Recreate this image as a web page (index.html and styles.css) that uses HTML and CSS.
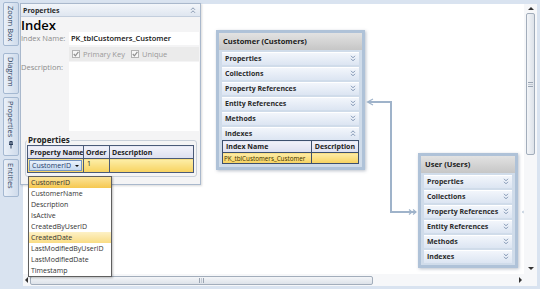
FILE: index.html
```html
<!DOCTYPE html>
<html lang="en">

<head>
    <meta charset="UTF-8">
    <meta name="viewport" content="width=device-width, initial-scale=1.0">
    <title>Entity Diagram</title>
    <link rel="stylesheet" href="styles.css">
</head>

<body>
    <div class="app">
        <nav class="side-tabs">
            <div class="side-tab tab-zoom">Zoom Box</div>
            <div class="side-tab tab-diagram">Diagram</div>
            <div class="side-tab tab-props">Properties
                <svg class="pin" viewBox="0 0 8 8"><path d="M4 0.5v3M2 3.5h4M2.8 3.5v-3h2.4v3M4 3.5v4"/></svg>
            </div>
            <div class="side-tab tab-entities">Entities</div>
        </nav>

        <div class="workspace">
            <div class="canvas">
                <!-- link between Customer and User -->
                <svg class="links" width="501" height="269" viewBox="0 0 501 269">
                    <path class="link-line" d="M345 98H368V208H393"/>
                    <path class="link-head" d="M350 95L344.5 98L350 101"/>
                    <path class="link-head" d="M386 205.5l3 2.5-3 2.5M390 205.5l3 2.5-3 2.5"/>
                    <path class="link-head" d="M499 208h5M501 206l2 2-2 2"/>
                </svg>

                <div class="entity customer">
                    <div class="entity-head">Customer (Customers)</div>
                    <div class="entity-row">Properties<svg class="chev" viewBox="0 0 6 7"><path d="M1 0.8l2 2 2-2M1 3.8l2 2 2-2"/></svg></div>
                    <div class="entity-row">Collections<svg class="chev" viewBox="0 0 6 7"><path d="M1 0.8l2 2 2-2M1 3.8l2 2 2-2"/></svg></div>
                    <div class="entity-row">Property References<svg class="chev" viewBox="0 0 6 7"><path d="M1 0.8l2 2 2-2M1 3.8l2 2 2-2"/></svg></div>
                    <div class="entity-row">Entity References<svg class="chev" viewBox="0 0 6 7"><path d="M1 0.8l2 2 2-2M1 3.8l2 2 2-2"/></svg></div>
                    <div class="entity-row">Methods<svg class="chev" viewBox="0 0 6 7"><path d="M1 0.8l2 2 2-2M1 3.8l2 2 2-2"/></svg></div>
                    <div class="entity-row">Indexes<svg class="chev" viewBox="0 0 6 7"><path d="M1 2.8l2-2 2 2M1 5.8l2-2 2 2"/></svg></div>
                    <table class="index-table">
                        <thead>
                            <tr>
                                <th class="col-index">Index Name</th>
                                <th>Description</th>
                            </tr>
                        </thead>
                        <tbody>
                            <tr>
                                <td>PK_tblCustomers_Customer</td>
                                <td></td>
                            </tr>
                        </tbody>
                    </table>
                </div>

                <div class="entity user">
                    <div class="entity-head">User (Users)</div>
                    <div class="entity-row">Properties<svg class="chev" viewBox="0 0 6 7"><path d="M1 0.8l2 2 2-2M1 3.8l2 2 2-2"/></svg></div>
                    <div class="entity-row">Collections<svg class="chev" viewBox="0 0 6 7"><path d="M1 0.8l2 2 2-2M1 3.8l2 2 2-2"/></svg></div>
                    <div class="entity-row">Property References<svg class="chev" viewBox="0 0 6 7"><path d="M1 0.8l2 2 2-2M1 3.8l2 2 2-2"/></svg></div>
                    <div class="entity-row">Entity References<svg class="chev" viewBox="0 0 6 7"><path d="M1 0.8l2 2 2-2M1 3.8l2 2 2-2"/></svg></div>
                    <div class="entity-row">Methods<svg class="chev" viewBox="0 0 6 7"><path d="M1 0.8l2 2 2-2M1 3.8l2 2 2-2"/></svg></div>
                    <div class="entity-row">Indexes<svg class="chev" viewBox="0 0 6 7"><path d="M1 0.8l2 2 2-2M1 3.8l2 2 2-2"/></svg></div>
                </div>
            </div>

            <div class="vscroll">
                <span class="arrow arrow-up"></span>
                <div class="thumb thumb-v"><span class="grip grip-v"></span></div>
                <span class="arrow arrow-down"></span>
            </div>
            <div class="hscroll">
                <span class="arrow arrow-left"></span>
                <div class="thumb thumb-h"><span class="grip grip-h"></span></div>
                <span class="arrow arrow-right"></span>
            </div>
            <div class="corner"></div>
        </div>

        <!-- floating properties pane -->
        <section class="props-pane">
            <header class="pane-head">
                <span>Properties</span>
                <svg class="chev chev-head" viewBox="0 0 6 7"><path d="M1 2.8l2-2 2 2M1 5.8l2-2 2 2"/></svg>
            </header>
            <div class="pane-body">
                <h2 class="pane-title">Index</h2>
                <div class="form-grid">
                    <label class="field-label">Index Name:</label>
                    <div class="text-input">PK_tblCustomers_Customer</div>
                    <span></span>
                    <div class="check-row">
                        <span class="check">
                            <svg class="check-box" viewBox="0 0 8 8"><rect x="0.5" y="0.5" width="7" height="7"/><path d="M1.8 4l1.6 1.8 3-4"/></svg>
                            Primary Key
                        </span>
                        <span class="check">
                            <svg class="check-box" viewBox="0 0 8 8"><rect x="0.5" y="0.5" width="7" height="7"/><path d="M1.8 4l1.6 1.8 3-4"/></svg>
                            Unique
                        </span>
                    </div>
                    <label class="field-label">Description:</label>
                    <div class="text-area"></div>
                </div>

                <fieldset class="group">
                    <legend>Properties</legend>
                    <table class="grid-table">
                        <thead>
                            <tr>
                                <th class="col-name">Property Name</th>
                                <th class="col-order">Order</th>
                                <th>Description</th>
                            </tr>
                        </thead>
                        <tbody>
                            <tr>
                                <td class="combo-cell">
                                    <div class="combo">CustomerID<span class="combo-arrow"></span></div>
                                </td>
                                <td>1</td>
                                <td></td>
                            </tr>
                        </tbody>
                    </table>
                </fieldset>
            </div>
        </section>

        <ul class="dropdown">
            <li class="current">CustomerID</li>
            <li>CustomerName</li>
            <li>Description</li>
            <li>IsActive</li>
            <li>CreatedByUserID</li>
            <li class="hover">CreatedDate</li>
            <li>LastModifiedByUserID</li>
            <li>LastModifiedDate</li>
            <li>Timestamp</li>
        </ul>
    </div>
</body>

</html>
```

FILE: styles.css
```css
* {
    box-sizing: border-box;
}

body {
    margin: 0;
    background-color: #d9e3f0;
    font-family: "Open Sans", "DejaVu Sans", sans-serif;
    font-size: 7px;
    color: #222;
}

.app {
    position: relative;
    display: flex;
    width: 540px;
    height: 289px;
    overflow: hidden;
}

/* left auto-hide tabs */
.side-tabs {
    width: 22px;
    flex: none;
    display: flex;
    flex-direction: column;
    padding: 2px 0 0 3px;
}

.side-tab {
    width: 16px;
    writing-mode: vertical-rl;
    display: flex;
    align-items: center;
    font-size: 7.5px;
    line-height: 14px;
    white-space: nowrap;
    color: #2a3d5a;
    background: linear-gradient(to right, #eaf0f8, #cfdbeb);
    border: 1px solid #a4b8d1;
    border-radius: 2px;
    padding: 3px 0;
}

.tab-zoom {
    height: 44px;
}

.tab-diagram {
    height: 41px;
    margin-top: 7px;
}

.tab-props {
    height: 59px;
    margin-top: 3px;
}

.tab-entities {
    height: 38px;
    margin-top: 3px;
}

.pin {
    width: 8px;
    height: 8px;
    margin-top: 4px;
    fill: none;
    stroke: #2a3d5a;
    stroke-width: 1;
}

/* diagram area */
.workspace {
    flex: 1;
    display: grid;
    grid-template-columns: 1fr 13px;
    grid-template-rows: 1fr 12px;
    margin: 4px 3px 3px 1px;
    background-color: #fff;
}

.canvas {
    position: relative;
    background-color: #fff;
}

.links {
    position: absolute;
    left: 0;
    top: 0;
}

.link-line {
    fill: none;
    stroke: #9fb3ca;
    stroke-width: 2;
}

.link-head {
    fill: none;
    stroke: #9fb3ca;
    stroke-width: 1.2;
}

.entity {
    position: absolute;
    background-color: #d0dcea;
    border: 3px solid #afc2d8;
    padding-bottom: 3px;
    box-shadow: 1px 1px 3px rgba(60, 80, 110, 0.35);
}

.customer {
    left: 193px;
    top: 26px;
    width: 149px;
}

.user {
    left: 395px;
    top: 149px;
    width: 100px;
    padding-bottom: 2px;
}

.entity-head {
    height: 17px;
    line-height: 17px;
    padding-left: 4px;
    font-size: 7.5px;
    font-weight: 700;
    color: #1b1b1b;
    background: linear-gradient(#e2e2e2, #c6c6c6);
}

.entity-row {
    display: flex;
    justify-content: space-between;
    align-items: center;
    height: 13px;
    margin: 2px 3px 0;
    padding: 0 3px 0 3px;
    font-weight: 700;
    color: #2b2b2b;
    background: linear-gradient(#f4f7fc, #dce5f2);
    box-shadow: inset 0 1px #fff;
    white-space: nowrap;
}

.chev {
    width: 6px;
    height: 7px;
    flex: none;
    fill: none;
    stroke: #8296b3;
    stroke-width: 1;
}

.index-table {
    width: calc(100% - 6px);
    margin: 0 3px;
    border-collapse: collapse;
    border: 1px solid #3c4f6e;
}

.index-table th,
.index-table td {
    border: 1px solid #3c4f6e;
    text-align: left;
    padding: 0 3px;
    white-space: nowrap;
}

.index-table th {
    height: 12px;
    font-weight: 700;
    background: linear-gradient(#f1f1f9, #dcdff0);
}

.index-table td {
    height: 11px;
    font-size: 6.3px;
    color: #3b3200;
    background: linear-gradient(#fdeca8, #f7d25e);
    padding: 0 1px;
}

.col-index {
    width: 89px;
}

/* scrollbars */
.vscroll {
    display: flex;
    flex-direction: column;
    align-items: center;
    padding: 3px 0 4px;
    background-color: #f6f7f9;
}

.hscroll {
    display: flex;
    align-items: center;
    padding: 0 2px 0 2px;
    background-color: #f6f7f9;
}

.corner {
    background-color: #f6f7f9;
}

.arrow {
    width: 0;
    height: 0;
    border: 3px solid transparent;
}

.arrow-up {
    border-top-width: 0;
    border-bottom-color: #333;
    margin-bottom: 3px;
}

.arrow-down {
    border-bottom-width: 0;
    border-top-color: #333;
    margin-top: auto;
}

.arrow-left {
    border-left-width: 0;
    border-right-color: #333;
    margin-right: 2px;
}

.arrow-right {
    border-right-width: 0;
    border-left-color: #333;
    margin-left: auto;
}

.thumb {
    display: flex;
    align-items: center;
    justify-content: center;
    border: 1px solid #a2adbb;
    border-radius: 2px;
}

.thumb-v {
    width: 9px;
    height: 142px;
    background: linear-gradient(to right, #f3f5f8, #dde2e9);
}

.thumb-h {
    width: 343px;
    height: 9px;
    background: linear-gradient(#f3f5f8, #dde2e9);
}

.grip-v {
    width: 5px;
    height: 5px;
    border-top: 1px solid #9aa4b2;
    border-bottom: 1px solid #9aa4b2;
    background: linear-gradient(#c3cad4, #c3cad4) center / 100% 1px no-repeat;
}

.grip-h {
    width: 5px;
    height: 5px;
    border-left: 1px solid #9aa4b2;
    border-right: 1px solid #9aa4b2;
    background: linear-gradient(#c3cad4, #c3cad4) center / 1px 100% no-repeat;
}

/* properties pane */
.props-pane {
    position: absolute;
    left: 20px;
    top: 3px;
    width: 181px;
    height: 182px;
    background-color: #f4f4f5;
    border: 1px solid #a9b8cc;
    box-shadow: 1px 1px 2px rgba(0, 0, 0, 0.15);
}

.pane-head {
    display: flex;
    justify-content: space-between;
    align-items: center;
    height: 13px;
    padding: 0 4px 0 2px;
    font-weight: 700;
    color: #2b2b2b;
    background: linear-gradient(#f3f6fa, #dfe6f0);
    border-bottom: 1px solid #c3cedd;
}

.chev-head {
    stroke: #8a9ab2;
}

.pane-title {
    margin: 1px 0 0;
    font-size: 13px;
    font-weight: 600;
    line-height: 14px;
    color: #000;
}

.form-grid {
    display: grid;
    grid-template-columns: 48px 130px;
}

.field-label {
    font-size: 7.5px;
    line-height: 13px;
    color: #8c8c8c;
}

.text-input {
    height: 13px;
    line-height: 13px;
    padding-left: 2px;
    font-size: 7.5px;
    font-weight: 600;
    color: #111;
    background-color: #fff;
}

.check-row {
    display: flex;
    align-items: center;
    height: 14px;
    margin-top: 2px;
    padding-left: 3px;
    background-color: #ebebeb;
}

.check {
    display: flex;
    align-items: center;
    gap: 3px;
    margin-right: 6px;
    font-size: 7.5px;
    color: #9a9a9a;
}

.check-box {
    width: 8px;
    height: 8px;
}

.check-box rect {
    fill: #f7f7f7;
    stroke: #b3b3b3;
    stroke-width: 1;
}

.check-box path {
    fill: none;
    stroke: #8f8f8f;
    stroke-width: 1.2;
}

.text-area {
    height: 69px;
    margin-top: 1px;
    background-color: #fff;
}

.group {
    margin: 4px 3px 0 4px;
    padding: 0 2px 3px 1px;
    border: 1px solid #c9d0da;
    border-radius: 3px;
}

.group legend {
    padding: 0 1px;
    font-size: 8px;
    font-weight: 700;
    line-height: 10px;
    color: #222;
}

.grid-table {
    width: 167px;
    table-layout: fixed;
    border-collapse: collapse;
    border: 1px solid #4a5a78;
}

.grid-table th,
.grid-table td {
    border: 1px solid #4a5a78;
    text-align: left;
    white-space: nowrap;
    overflow: hidden;
}

.grid-table th {
    height: 13px;
    padding: 0 2px;
    font-weight: 700;
    font-size: 7px;
    background: linear-gradient(#f2f2fa, #dcdff0);
}

.grid-table td {
    height: 14px;
    padding: 0 3px;
    background: linear-gradient(#fdeea8, #f7d25e);
    vertical-align: top;
}

.grid-table .combo-cell {
    padding: 1px;
}

.col-name {
    width: 56px;
}

.col-order {
    width: 26px;
}

.combo {
    display: flex;
    justify-content: space-between;
    align-items: center;
    height: 11px;
    padding: 0 2px;
    color: #1d3b6b;
    background: linear-gradient(#eaf2fb, #c6d9f0);
    border: 1px solid #7696c2;
}

.combo-arrow {
    width: 0;
    height: 0;
    border: 2.5px solid transparent;
    border-bottom-width: 0;
    border-top-color: #111;
}

.dropdown {
    position: absolute;
    left: 28px;
    top: 176px;
    width: 84px;
    margin: 0;
    padding: 0;
    list-style: none;
    background-color: #fff;
    border: 1px solid #5f5f5f;
    box-shadow: 1px 1px 2px rgba(0, 0, 0, 0.25);
}

.dropdown li {
    height: 11px;
    line-height: 11px;
    padding-left: 2px;
    color: #333;
}

.dropdown .current {
    background: linear-gradient(#fbe39a, #f6c850);
}

.dropdown .hover {
    background: linear-gradient(#fdf1c6, #f9dc84);
}
```
